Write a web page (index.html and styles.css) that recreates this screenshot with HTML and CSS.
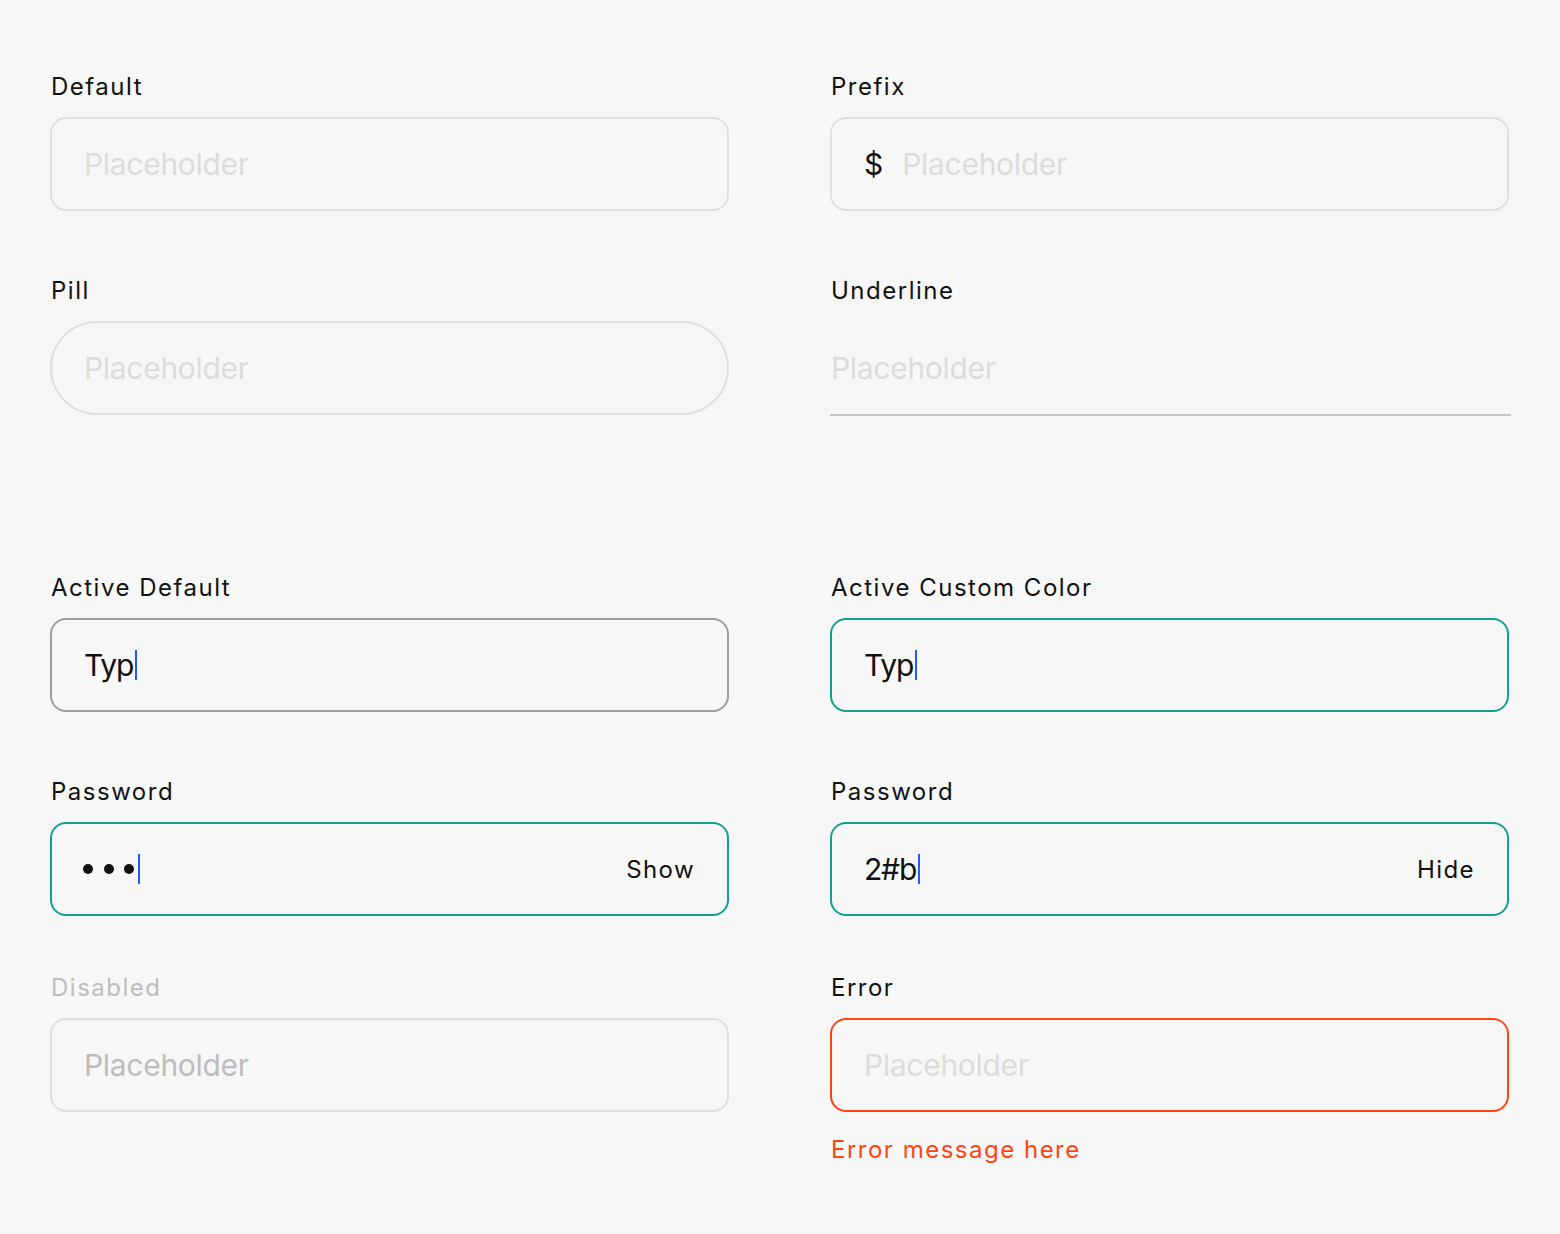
FILE: index.html
```html
<!DOCTYPE html>
<html lang="en">
<head>
<meta charset="utf-8">
<title>Inputs</title>
<link rel="stylesheet" href="styles.css">
</head>
<body>
<main class="page">
  <section class="row row-1">
    <div class="field">
      <div class="label">Default</div>
      <div class="box"><span class="placeholder">Placeholder</span></div>
    </div>
    <div class="field">
      <div class="label">Prefix</div>
      <div class="box"><span class="prefix">$</span><span class="placeholder">Placeholder</span></div>
    </div>
  </section>

  <section class="row row-2">
    <div class="field">
      <div class="label">Pill</div>
      <div class="box pill"><span class="placeholder">Placeholder</span></div>
    </div>
    <div class="field">
      <div class="label">Underline</div>
      <div class="box underline"><span class="placeholder">Placeholder</span></div>
    </div>
  </section>

  <section class="row row-3">
    <div class="field">
      <div class="label">Active Default</div>
      <div class="box active"><span class="value">Typ</span><span class="caret"></span></div>
    </div>
    <div class="field">
      <div class="label">Active Custom Color</div>
      <div class="box teal"><span class="value">Typ</span><span class="caret"></span></div>
    </div>
  </section>

  <section class="row row-4">
    <div class="field">
      <div class="label">Password</div>
      <div class="box teal">
        <span class="dots"><i></i><i></i><i></i></span><span class="caret"></span>
        <span class="toggle">Show</span>
      </div>
    </div>
    <div class="field">
      <div class="label">Password</div>
      <div class="box teal">
        <span class="value">2#b</span><span class="caret"></span>
        <span class="toggle">Hide</span>
      </div>
    </div>
  </section>

  <section class="row row-5">
    <div class="field disabled">
      <div class="label">Disabled</div>
      <div class="box"><span class="placeholder">Placeholder</span></div>
    </div>
    <div class="field">
      <div class="label">Error</div>
      <div class="box error"><span class="placeholder">Placeholder</span></div>
      <div class="error-msg">Error message here</div>
    </div>
  </section>
</main>
</body>
</html>
```

FILE: styles.css
```css
html, body {
  margin: 0;
  padding: 0;
}

body {
  background: #f7f7f7;
  font-family: Inter, "Noto Sans", "DejaVu Sans", sans-serif;
  color: #111;
}

.page {
  padding: 70px 51px 0 50px;
  min-height: 1234px;
  box-sizing: border-box;
}

.row {
  display: grid;
  grid-template-columns: 679px 679px;
  column-gap: 101px;
}

.row-2 { margin-top: 63px; }
.row-3 { margin-top: 155px; }
.row-4 { margin-top: 63px; }
.row-5 { margin-top: 55px; }

.label {
  font-size: 24px;
  line-height: 30px;
  letter-spacing: 1.5px;
  color: #111;
  padding: 2px 0 0 1px;
  margin-bottom: 15px;
}

.box {
  box-sizing: border-box;
  height: 94px;
  border: 2px solid #dfdfdf;
  border-radius: 16px;
  padding: 0 32px;
  display: flex;
  align-items: center;
  font-size: 30px;
  line-height: normal;
}

.placeholder {
  color: #dcdcdc;
  letter-spacing: -0.3px;
}

.prefix {
  color: #111;
  margin-right: 19px;
}

.pill {
  border-radius: 47px;
}

.underline {
  border: none;
  border-bottom: 2px solid #c6c6c6;
  border-radius: 0;
  padding: 0 0 0 1px;
  height: 95px;
  margin-right: -2px;
}

.active {
  border-color: #9e9e9e;
}

.teal {
  border-color: #14a08f;
}

.error {
  border-color: #ff4412;
}

.value {
  color: #111;
  letter-spacing: -1.2px;
}

.caret {
  display: inline-block;
  width: 2px;
  height: 30px;
  background: #2457ff;
  margin-left: 2px;
}

.dots {
  display: flex;
  gap: 10.5px;
  margin-left: -1px;
  margin-right: 2px;
}

.dots i {
  display: block;
  width: 10px;
  height: 10px;
  border-radius: 50%;
  background: #111;
}

.toggle {
  margin-left: auto;
  font-size: 24px;
  letter-spacing: 1.4px;
  color: #111;
}

.disabled .label {
  color: #bdbdbd;
}

.disabled .placeholder {
  color: #bdbdbd;
}

.error-msg {
  margin-top: 23px;
  font-size: 24px;
  line-height: 30px;
  letter-spacing: 1.5px;
  color: #ff4412;
  padding-left: 1px;
}
```
